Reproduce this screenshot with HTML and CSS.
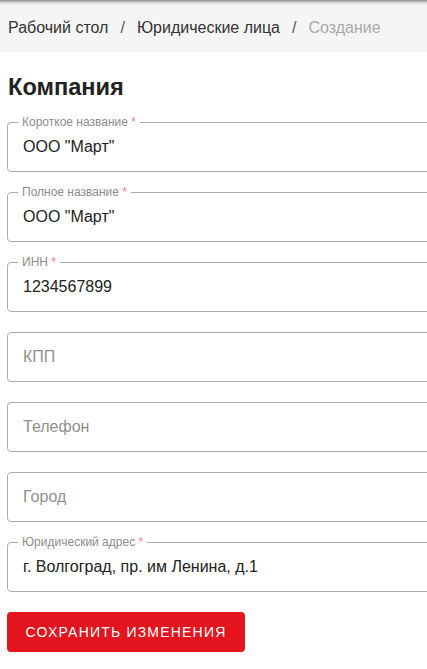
FILE: index.html
```html
<!DOCTYPE html>
<html lang="ru">
<head>
<meta charset="utf-8">
<link rel="stylesheet" href="styles.css">
</head>
<body>
<div class="page">
  <nav class="crumbs">
    <span class="crumb">Рабочий стол</span>
    <span class="sep">/</span>
    <span class="crumb">Юридические лица</span>
    <span class="sep">/</span>
    <span class="crumb current">Создание</span>
  </nav>
  <main class="content">
    <h1 class="title">Компания</h1>
    <div class="field">
      <span class="label">Короткое название <span class="req">*</span></span>
      <span class="value">ООО "Март"</span>
    </div>
    <div class="field">
      <span class="label">Полное название <span class="req">*</span></span>
      <span class="value">ООО "Март"</span>
    </div>
    <div class="field">
      <span class="label">ИНН <span class="req">*</span></span>
      <span class="value">1234567899</span>
    </div>
    <div class="field">
      <span class="value placeholder">КПП</span>
    </div>
    <div class="field">
      <span class="value placeholder">Телефон</span>
    </div>
    <div class="field">
      <span class="value placeholder">Город</span>
    </div>
    <div class="field">
      <span class="label">Юридический адрес <span class="req">*</span></span>
      <span class="value">г. Волгоград, пр. им Ленина, д.1</span>
    </div>
    <button class="save">Сохранить изменения</button>
  </main>
</div>
</body>
</html>
```
FILE: styles.css
```css
* { box-sizing: border-box; }
html, body { margin: 0; padding: 0; background: #fff; overflow: hidden; }
body { font-family: "Liberation Sans", Arial, sans-serif; color: #222; }
.page { width: 427px; overflow: hidden; }
.crumbs {
  height: 52px;
  background: linear-gradient(to bottom, #8a8a8a 0px, #c8c8c8 2px, #ececec 4px, #f5f5f5 6px, #f5f5f5 100%);
  display: flex;
  align-items: center;
  padding: 3px 0 0 8px;
  font-size: 16px;
  color: #333;
  gap: 12px;
}
.sep { color: #555; }
.current { color: #a8a8a8; }
.content { padding: 20px 0 0 7px; }
.title {
  margin: 0 0 20px 1px;
  font-size: 23.6px;
  line-height: 30px;
  font-weight: bold;
  color: #222;
}
.field {
  position: relative;
  width: calc(100% + 10px);
  height: 50px;
  border: 1px solid #ababab;
  border-radius: 4px;
  margin-bottom: 20px;
  display: flex;
  align-items: center;
  padding: 0 15px;
}
.label {
  position: absolute;
  top: -8px;
  left: 10px;
  padding: 0 4px;
  background: #fff;
  font-size: 12px;
  line-height: 14px;
  color: #8c8c8c;
}
.req { color: #ef7d7d; }
.value { font-size: 16px; color: #222; }
.placeholder { color: #8f8f8f; }
.save {
  display: block;
  width: 238px;
  height: 40px;
  border: 0;
  border-radius: 4px;
  background: #e3141e;
  color: #fff;
  font-family: "Liberation Sans", Arial, sans-serif;
  font-size: 14px;
  letter-spacing: 1.2px;
  text-transform: uppercase;
  margin-top: 0;
  padding: 0;
}
```
